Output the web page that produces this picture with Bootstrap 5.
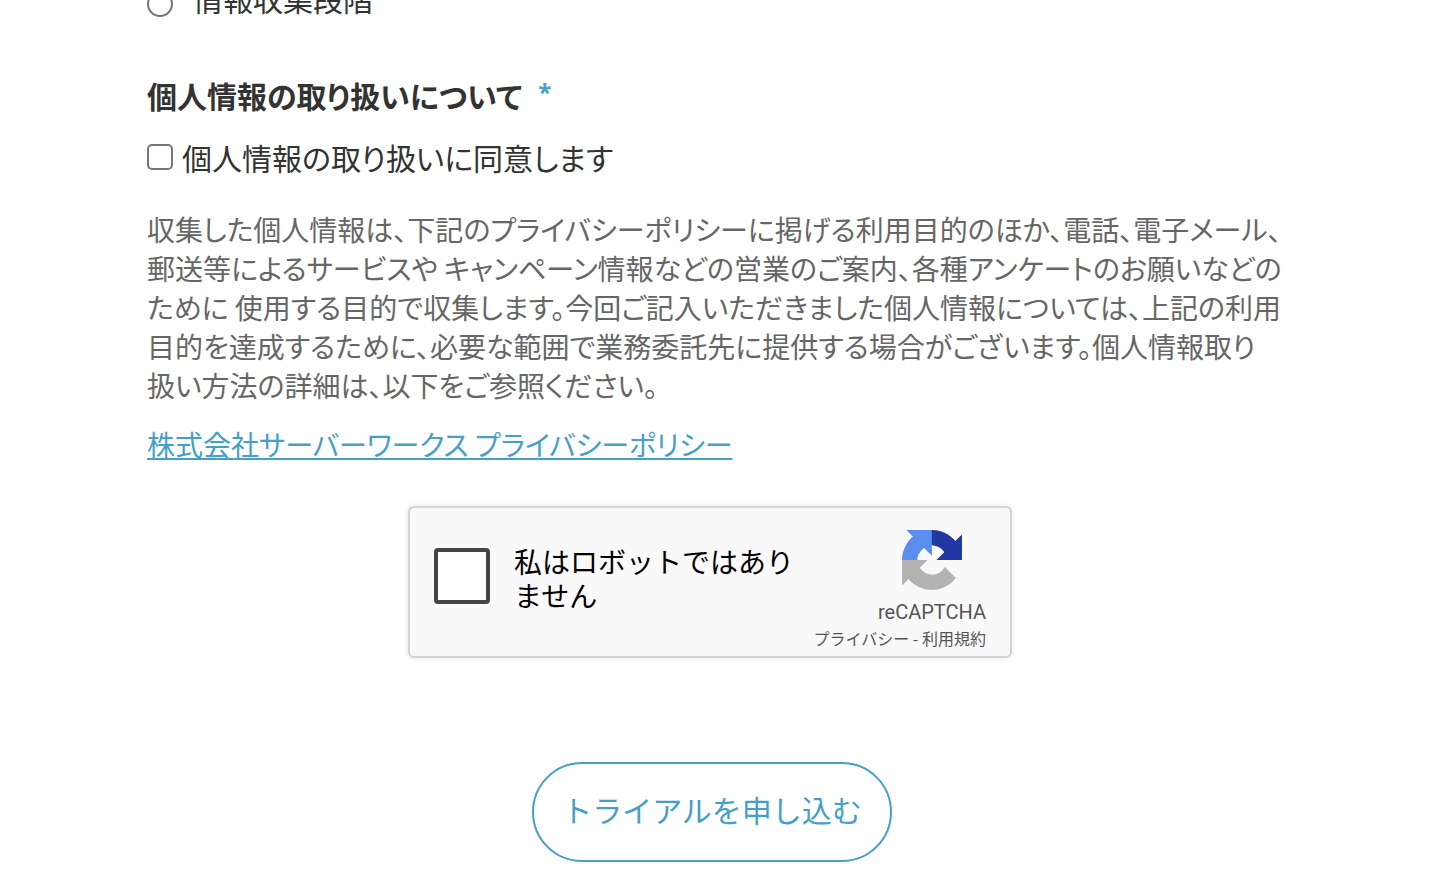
<!DOCTYPE html>
<html lang="ja">
<head>
<meta charset="utf-8">
<meta name="viewport" content="width=device-width, initial-scale=1">
<title>トライアル申し込み</title>
<link rel="stylesheet" href="https://cdn.jsdelivr.net/npm/bootstrap@5.3.0/dist/css/bootstrap.min.css">
<style>
:root { --brand: #459fc8; --ink: #333; }
body { font-family: "Noto Sans CJK JP", sans-serif; color: var(--ink); background: #fff; padding-right: 22px; overflow-x: hidden; }
.trial-form { max-width: 1130px; font-feature-settings: "palt"; font-size: 30px; line-height: 40px; }
.stage-row { margin-top: -22px; }
.trial-form .form-check-input { float: none; width: 26px; height: 26px; margin: 0; border: 2px solid #767676; flex: none; }
.trial-form .form-check-input[type=checkbox] { border-radius: 5px; }
.trial-form .form-check-input[type=radio] { margin-top: 12px; }
.consent-title { font-size: 30px; line-height: 40px; font-weight: 700; margin-top: 57px; }
.required-mark { color: var(--brand); font-family: "Noto Sans", sans-serif; font-size: 24px; line-height: 34px; }
.consent-row { margin-top: 22px; gap: 9px; }
.policy-note { color: #666; font-size: 28px; line-height: 39px; margin: 33px -16px 20px 0; }
.policy-link { color: var(--brand); text-underline-offset: 2px; text-decoration-thickness: 2px; }
.policy-row { font-size: 28px; line-height: 39px; }
.captcha-row { margin-top: 42px; padding-right: 4px; }
.captcha-box { max-width: 604px; min-height: 152px; background: #f9f9f9; border: 2px solid #d3d3d3; border-radius: 6px; box-shadow: 0 0 4px 1px rgba(0,0,0,.08); font-feature-settings: normal; }
.captcha-check { padding-top: 36px; }
.captcha-tick { appearance: none; width: 56px; height: 56px; flex: none; margin: 4px 0 0; background: #fff; border: 4px solid #444; border-radius: 4px; }
.captcha-label { color: #000; font-size: 28px; line-height: 34px; max-width: 290px; }
.captcha-brand { color: #555; padding-top: 22px; }
.captcha-name { font-family: Roboto, sans-serif; font-size: 20px; line-height: 28px; }
.captcha-terms { font-size: 16px; line-height: 24px; }
.captcha-terms a { color: inherit; }
.submit-btn { --bs-btn-color: var(--brand); --bs-btn-border-color: var(--brand); --bs-btn-hover-color: #fff; --bs-btn-hover-bg: var(--brand); width: 360px; height: 100px; padding: 0 0 6px; border-width: 2px; border-radius: 50px; font-size: 30px; margin-top: 104px; margin-bottom: 16px; }
</style>
</head>
<body>
<main>
<form class="trial-form mx-auto d-flex flex-column">
  <div class="stage-row d-flex align-items-center">
    <input class="form-check-input" type="radio" name="stage" id="stage-info">
    <label class="ms-3 ps-1" for="stage-info">情報収集段階</label>
  </div>
  <h2 class="consent-title d-flex mb-0">個人情報の取り扱いについて<span class="required-mark ms-3">*</span></h2>
  <div class="consent-row d-flex align-items-center">
    <input class="form-check-input" type="checkbox" id="consent">
    <label for="consent">個人情報の取り扱いに同意します</label>
  </div>
  <p class="policy-note">収集した個人情報は、下記のプライバシーポリシーに掲げる利用目的のほか、電話、電子メール、<br>郵送等によるサービスや キャンペーン情報などの営業のご案内、各種アンケートのお願いなどの<br>ために 使用する目的で収集します。今回ご記入いただきました個人情報については、上記の利用<br>目的を達成するために、必要な範囲で業務委託先に提供する場合がございます。個人情報取り<br>扱い方法の詳細は、以下をご参照ください。</p>
  <div class="policy-row"><a class="policy-link" href="#">株式会社サーバーワークス プライバシーポリシー</a></div>
  <div class="captcha-row">
    <div class="captcha-box mx-auto d-flex justify-content-between">
      <div class="captcha-check d-flex align-items-start ps-4">
        <input class="captcha-tick" type="checkbox" id="robot">
        <label class="captcha-label ms-4" for="robot">私はロボットではありません</label>
      </div>
      <div class="captcha-brand d-flex flex-column align-items-end pe-4">
        <svg class="me-4" width="60" height="60" viewBox="0 0 64 64" aria-hidden="true">
          <path fill="#2138a5" d="M64 31.955l-.033-1.37V4.687l-7.16 7.16C50.948 4.674 42.033.093 32.05.093c-10.4 0-19.622 4.96-25.458 12.64l11.736 11.86a15.55 15.55 0 0 1 4.754-5.334c2.05-1.6 4.952-2.906 8.968-2.906.485 0 .86.057 1.135.163 4.976.393 9.288 3.14 11.828 7.124l-8.307 8.307L64 31.953"/>
          <path fill="#5b8def" d="M31.862.094l-1.37.033H4.594l7.16 7.16C4.58 13.147 0 22.06 0 32.046c0 10.4 4.96 19.622 12.64 25.458L24.5 45.768a15.55 15.55 0 0 1-5.334-4.754c-1.6-2.05-2.906-4.952-2.906-8.968 0-.485.057-.86.163-1.135.393-4.976 3.14-9.288 7.124-11.828l8.307 8.307L31.86.095"/>
          <path fill="#b3b3b3" d="M.001 32.045l.033 1.37v25.898l7.16-7.16c5.86 7.173 14.774 11.754 24.76 11.754 10.4 0 19.622-4.96 25.458-12.64l-11.736-11.86a15.55 15.55 0 0 1-4.754 5.334c-2.05 1.6-4.952 2.906-8.968 2.906-.485 0-.86-.057-1.135-.163-4.976-.393-9.288-3.14-11.828-7.124l8.307-8.307L0 32.045"/>
        </svg>
        <div class="captcha-name mt-2">reCAPTCHA</div>
        <div class="captcha-terms"><a class="text-decoration-none" href="#">プライバシー</a> - <a class="text-decoration-none" href="#">利用規約</a></div>
      </div>
    </div>
  </div>
  <button class="submit-btn btn align-self-center" type="button">トライアルを申し込む</button>
</form>
</main>
<script src="https://cdn.jsdelivr.net/npm/bootstrap@5.3.0/dist/js/bootstrap.bundle.min.js"></script>
</body>
</html>
